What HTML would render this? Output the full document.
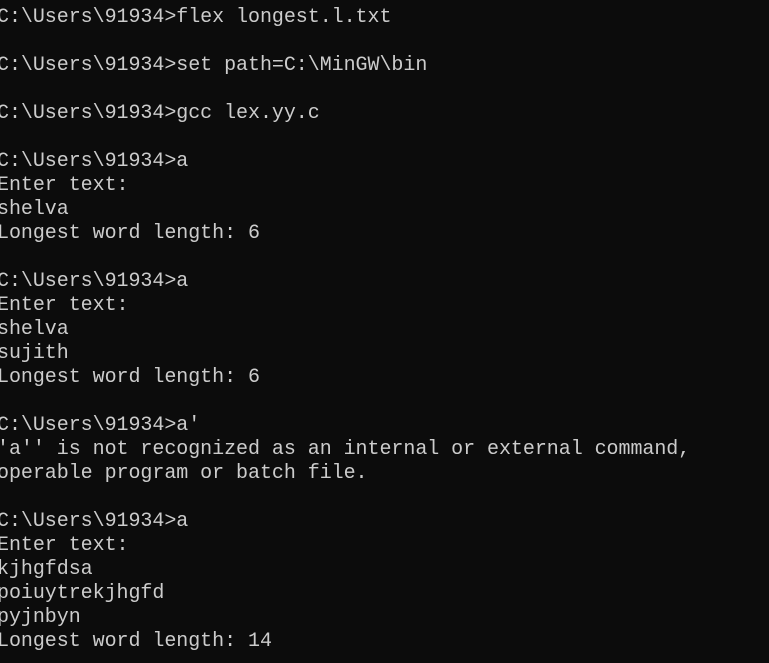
<!DOCTYPE html>
<html><head><meta charset="utf-8"><style>
html,body{margin:0;padding:0;background:#0c0c0c;width:769px;height:663px;overflow:hidden}
pre{margin:0;position:absolute;left:-3px;top:6px;font-family:"Liberation Mono",monospace;font-size:20px;line-height:24px;color:#cccccc;letter-spacing:-0.05px}
</style></head><body><pre>C:\Users\91934&gt;flex longest.l.txt

C:\Users\91934&gt;set path=C:\MinGW\bin

C:\Users\91934&gt;gcc lex.yy.c

C:\Users\91934&gt;a
Enter text:
shelva
Longest word length: 6

C:\Users\91934&gt;a
Enter text:
shelva
sujith
Longest word length: 6

C:\Users\91934&gt;a'
'a'' is not recognized as an internal or external command,
operable program or batch file.

C:\Users\91934&gt;a
Enter text:
kjhgfdsa
poiuytrekjhgfd
pyjnbyn
Longest word length: 14</pre></body></html>
